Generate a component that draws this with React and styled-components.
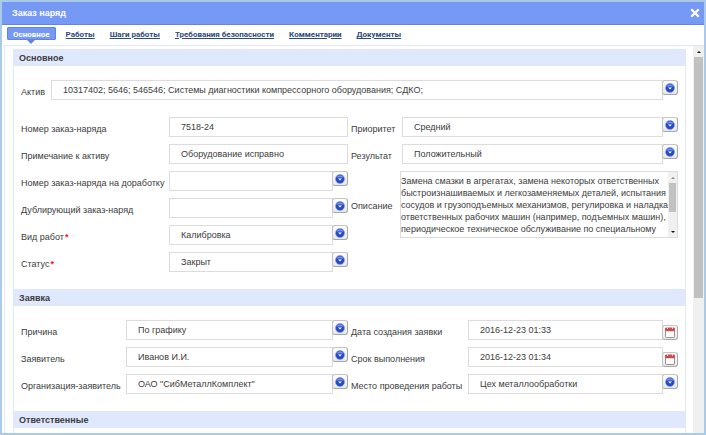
import React, { useId } from "react";
import styled, { createGlobalStyle, css } from "styled-components";

const font = `"Liberation Sans", Arial, sans-serif`;
const line = "#e0e7fb";

const GlobalStyle = createGlobalStyle`
  *, *::before, *::after { box-sizing: border-box; }
  body { margin: 0; background: #fff; font-family: ${font}; font-size: 9px; color: #3c3c3c; }
  button, input, textarea { font: inherit; color: inherit; margin: 0; }
`;

const Dialog = styled.main`
  display: flex;
  flex-direction: column;
  height: 100vh;
  border: 2px solid #a9cbe8;
  background: #fff;
`;

const TitleBar = styled.header`
  display: flex;
  align-items: center;
  justify-content: space-between;
  flex: none;
  height: 23px;
  padding: 0 3px 0 10px;
  background: #7799f6;
  border-bottom: 1px solid #6384e0;
`;

const Title = styled.h1`
  margin: 0;
  font-size: 9px;
  font-weight: bold;
  color: #fff;
`;

const CloseButton = styled.button`
  display: flex;
  padding: 0;
  border: 0;
  background: none;
  cursor: pointer;
`;

const Tabs = styled.nav`
  display: flex;
  gap: 5px;
  flex: none;
  height: 20px;
  padding: 2px 5px 0;
`;

const Tab = styled.a`
  height: 13px;
  padding: 0 5px;
  border-radius: 2px;
  font-family: Roboto, ${font};
  font-size: 8px;
  line-height: 15px;
  font-weight: bold;
  color: #2c4a7c;
  text-decoration: underline;
  white-space: nowrap;

  ${({ $active }) =>
    $active &&
    css`
      position: relative;
      padding: 0 6px;
      background: #7799f6;
      box-shadow: inset 0 0 0 1px #6385e2;
      color: #fff;
      text-decoration: none;

      &::after {
        content: "";
        position: absolute;
        top: 100%;
        left: calc(50% - 4px);
        border: 4px solid transparent;
        border-top-color: #6385e2;
        border-bottom: 0;
      }
    `}
`;

const Viewport = styled.div`
  display: flex;
  flex: 1;
  min-height: 0;
  margin-left: 2px;
  border: solid ${line};
  border-width: 1px 0 0 1px;
`;

const Content = styled.div`
  flex: 1;
  min-width: 0;
  overflow-y: auto;
  scrollbar-width: none;
  padding: 3px 7px 0 8px;
`;

const Track = styled.div`
  display: flex;
  flex-direction: column;
  align-items: center;
  flex: none;
  width: ${({ $width }) => $width}px;
  padding: 0 1px;
  background: #f0f0f0;
`;

const Arrow = styled.span`
  display: flex;
  align-items: center;
  justify-content: center;
  flex: none;
  height: 11px;

  &::before {
    content: "";
    border: 2px solid transparent;
    ${({ $down, $dim }) => css`
      border-${$down ? "top" : "bottom"}-color: ${$dim ? "#8a8a8a" : "#111"};
      border-${$down ? "bottom" : "top"}: 0;
    `}
  }
`;

const Rail = styled.span`
  flex: 1;
  width: 100%;
`;

const Thumb = styled.span`
  display: block;
  width: 100%;
  height: ${({ $size }) => $size};
  background: #c1c1c1;
`;

const Section = styled.section`
  border: solid ${line};
  border-width: 0 1px;
`;

const SectionTitle = styled.h2`
  margin: 0;
  height: 17px;
  padding-left: 5px;
  background: #e0e8fe;
  font-size: 9px;
  line-height: 19px;
  font-weight: bold;
`;

const SectionBody = styled.div`
  display: flex;
  flex-direction: column;
  gap: 17px;
  padding: 14px 7px 17px;
`;

const Columns = styled.div`
  display: grid;
  grid-template-columns: 1fr 1fr;
  gap: 3px;
  align-items: start;
`;

const Column = styled.div`
  display: flex;
  flex-direction: column;
  gap: 7px;
`;

const Row = styled.div`
  display: grid;
  grid-template-columns: ${({ $label }) => $label}px 1fr;
  align-items: center;
`;

const Label = styled.label`
  padding-top: 3px;
  white-space: nowrap;
`;

const Required = styled.span`
  margin-left: 1px;
  font-weight: bold;
  color: #f01818;
`;

const Control = styled.div`
  display: flex;
  align-items: ${({ $low }) => ($low ? "flex-end" : "flex-start")};
  min-width: 0;
`;

const Input = styled.input`
  flex: 1;
  min-width: 0;
  height: 20px;
  padding: 0 12px 1px 11px;
  border: 1px solid #dcdcdc;
  border-radius: 0;
  background: #fff;
  outline-color: #7799f6;
`;

const PickButton = styled.button`
  display: flex;
  align-items: center;
  justify-content: center;
  flex: none;
  width: 16px;
  height: 15px;
  margin-left: -1px;
  padding: 0;
  border: 1px solid #c4c4c4;
  border-right-color: #a8a8a8;
  border-bottom-color: #a8a8a8;
  border-radius: 3px;
  background: linear-gradient(#fdfdfd, #e8e8e8);
  cursor: pointer;
`;

const TextBox = styled.div`
  display: flex;
  height: 67px;
  border: 1px solid #dcdcdc;
`;

const TextArea = styled.textarea`
  flex: 1;
  min-width: 0;
  padding: 3px 0 0;
  border: 0;
  outline: 0;
  background: #fff;
  line-height: 12px;
  white-space: pre;
  resize: none;
  overflow: hidden;
`;

function CloseIcon() {
  return (
    <svg width="12" height="12" viewBox="0 0 12 12" aria-hidden="true">
      <path d="M2.2 2.2l7.6 7.6M9.8 2.2l-7.6 7.6" stroke="#fff" strokeWidth="2.3" />
    </svg>
  );
}

function DropIcon() {
  return (
    <svg width="10" height="10" viewBox="0 0 10 10" aria-hidden="true">
      <circle cx="5" cy="5" r="4.5" fill="#2549c6" stroke="#8c9fe0" strokeWidth=".6" />
      <path d="M1.4 3.8A3.8 3.8 0 0 1 8.6 3.8Q5 2.6 1.4 3.8Z" fill="#7592ea" />
      <path d="M3 4.4h4L5 6.5Z" fill="#fff" />
    </svg>
  );
}

function CalendarIcon() {
  return (
    <svg width="10" height="11" viewBox="0 0 10 11" aria-hidden="true">
      <rect x=".5" y="1" width="9" height="9.5" rx=".8" fill="#fbfbfb" stroke="#8d8488" strokeWidth=".9" />
      <rect x=".3" y=".8" width="9.4" height="3.2" fill="#d6474b" />
      <path d="M2.5 0v2M7.5 0v2" stroke="#f6d5d5" strokeWidth=".9" />
      <path d="M1 4.5h8" stroke="#c9c0c2" strokeWidth=".6" />
    </svg>
  );
}

function ScrollTrack({ width, size, dimUp, withDown }) {
  return (
    <Track $width={width} aria-hidden="true">
      <Arrow $dim={dimUp} />
      <Rail>
        <Thumb $size={size} />
      </Rail>
      {withDown && <Arrow $down />}
    </Track>
  );
}

function Field({ label, labelWidth, value = "", required, picker }) {
  const id = useId();
  const isDate = picker === "date";
  return (
    <Row $label={labelWidth}>
      <Label htmlFor={id}>
        {label}
        {required && <Required>*</Required>}
      </Label>
      <Control $low={isDate}>
        <Input id={id} type="text" defaultValue={value} required={required} />
        {picker && (
          <PickButton type="button" aria-label={`Выбрать: ${label}`}>
            {isDate ? <CalendarIcon /> : <DropIcon />}
          </PickButton>
        )}
      </Control>
    </Row>
  );
}

function TextField({ label, labelWidth, value }) {
  const id = useId();
  return (
    <Row $label={labelWidth}>
      <Label htmlFor={id}>{label}</Label>
      <TextBox>
        <TextArea id={id} defaultValue={value} />
        <ScrollTrack width={9} size="67%" dimUp withDown />
      </TextBox>
    </Row>
  );
}

const tabs = [
  "Основное",
  "Работы",
  "Шаги работы",
  "Требования безопасности",
  "Комментарии",
  "Документы",
];

const description = `Замена смазки в агрегатах, замена некоторых ответственных
быстроизнашиваемых и легкозаменяемых деталей, испытания
сосудов и грузоподъемных механизмов, регулировка и наладка
ответственных рабочих машин (например, подъемных машин),
периодическое техническое обслуживание по специальному`;

export default function App() {
  return (
    <>
      <GlobalStyle />
      <Dialog>
        <TitleBar>
          <Title>Заказ наряд</Title>
          <CloseButton type="button" aria-label="Закрыть">
            <CloseIcon />
          </CloseButton>
        </TitleBar>
        <Tabs>
          {tabs.map((name, i) => (
            <Tab key={name} href="#" $active={i === 0} aria-current={i === 0 ? "page" : undefined}>
              {name}
            </Tab>
          ))}
        </Tabs>
        <Viewport>
          <Content>
            <Section>
              <SectionTitle>Основное</SectionTitle>
              <SectionBody>
                <Field
                  label="Актив"
                  labelWidth={30}
                  value="10317402; 5646; 546546; Системы диагностики компрессорного оборудования; СДКО;"
                  picker="list"
                />
                <Columns>
                  <Column>
                    <Field label="Номер заказ-наряда" labelWidth={148} value="7518-24" />
                    <Field label="Примечание к активу" labelWidth={148} value="Оборудование исправно" />
                    <Field label="Номер заказ-наряда на доработку" labelWidth={148} picker="list" />
                    <Field label="Дублирующий заказ-наряд" labelWidth={148} picker="list" />
                    <Field label="Вид работ" labelWidth={148} value="Калибровка" required picker="list" />
                    <Field label="Статус" labelWidth={148} value="Закрыт" required picker="list" />
                  </Column>
                  <Column>
                    <Field label="Приоритет" labelWidth={51} value="Средний" picker="list" />
                    <Field label="Результат" labelWidth={51} value="Положительный" picker="list" />
                    <TextField label="Описание" labelWidth={49} value={description} />
                  </Column>
                </Columns>
              </SectionBody>
            </Section>
            <Section>
              <SectionTitle>Заявка</SectionTitle>
              <SectionBody>
                <Columns>
                  <Column>
                    <Field label="Причина" labelWidth={105} value="По графику" picker="list" />
                    <Field label="Заявитель" labelWidth={105} value="Иванов И.И." picker="list" />
                    <Field
                      label="Организация-заявитель"
                      labelWidth={105}
                      value={'ОАО "СибМеталлКомплект"'}
                      picker="list"
                    />
                  </Column>
                  <Column>
                    <Field label="Дата создания заявки" labelWidth={117} value="2016-12-23 01:33" picker="date" />
                    <Field label="Срок выполнения" labelWidth={117} value="2016-12-23 01:34" picker="date" />
                    <Field
                      label="Место проведения работы"
                      labelWidth={117}
                      value="Цех металлообработки"
                      picker="list"
                    />
                  </Column>
                </Columns>
              </SectionBody>
            </Section>
            <Section>
              <SectionTitle>Ответственные</SectionTitle>
              <SectionBody />
            </Section>
          </Content>
          <ScrollTrack width={11} size="64%" />
        </Viewport>
      </Dialog>
    </>
  );
}
